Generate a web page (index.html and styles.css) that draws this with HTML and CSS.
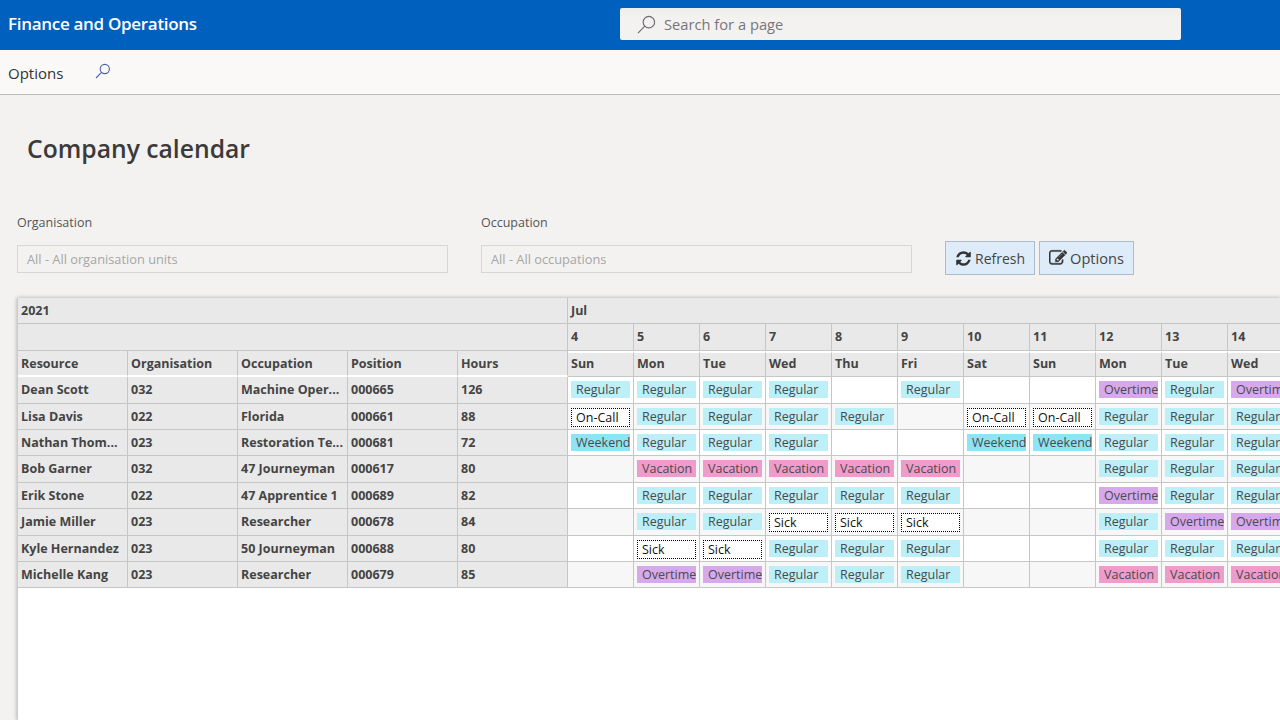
FILE: index.html
```html
<!DOCTYPE html>
<html lang="en">
<head>
<meta charset="utf-8">
<title>Company calendar</title>
<link rel="stylesheet" href="styles.css">
</head>
<body>
<header class="topbar">
  <div class="brand">Finance and Operations</div>
  <div class="search">
    <svg class="search-icon" viewBox="0 0 20 20"><circle cx="12.5" cy="7.5" r="6"/><path d="M8.2 11.8 1 19"/></svg>
    <span>Search for a page</span>
  </div>
</header>
<nav class="toolbar">
  <span class="tool-label">Options</span>
  <svg class="tool-icon" viewBox="0 0 16 16"><circle cx="9.8" cy="6" r="4.6"/><path d="M6.5 9.3 1 15"/></svg>
</nav>
<main class="page">
  <h1 class="title">Company calendar</h1>
  <section class="filters">
    <div class="field">
      <label class="field-label">Organisation</label>
      <div class="field-input">All - All organisation units</div>
    </div>
    <div class="field">
      <label class="field-label">Occupation</label>
      <div class="field-input">All - All occupations</div>
    </div>
    <div class="actions">
      <button class="btn"><svg class="btn-icon" viewBox="0 0 1792 1792"><path d="M1639 1056q0 5-1 7-64 268-268 434.5t-478 166.5q-146 0-282.5-55t-243.5-157l-129 129q-19 19-45 19t-45-19-19-45v-448q0-26 19-45t45-19h448q26 0 45 19t19 45-19 45l-137 137q71 66 161 102t187 36q134 0 250-65t186-179q11-17 53-117 8-23 30-23h192q13 0 22.5 9.5t9.5 22.5zm25-800v448q0 26-19 45t-45 19h-448q-26 0-45-19t-19-45 19-45l138-138q-148-137-349-137-134 0-250 65t-186 179q-11 17-53 117-8 23-30 23h-199q-13 0-22.5-9.5t-9.5-22.5v-7q65-268 270-434.5t480-166.5q146 0 284 55.5t245 156.5l130-129q19-19 45-19t45 19 19 45z"/></svg>Refresh</button>
      <button class="btn btn-wide"><svg class="btn-icon btn-icon-lg" viewBox="0 0 1792 1792"><path d="M888 1184l116-116-152-152-116 116v56h96v96h56zm440-720q-16-16-33 1l-350 350q-17 17-1 33t33-1l350-350q17-17 1-33zm80 594v190q0 119-84.5 203.5t-203.5 84.5h-832q-119 0-203.5-84.5t-84.5-203.5v-832q0-119 84.5-203.5t203.5-84.5h832q63 0 117 25 15 7 18 23 3 17-9 29l-49 49q-14 14-32 8-23-6-45-6h-832q-66 0-113 47t-47 113v832q0 66 47 113t113 47h832q66 0 113-47t47-113v-126q0-13 9-22l64-64q15-15 35-7t20 29zm-96-738l288 288-672 672h-288v-288zm444 132l-92 92-288-288 92-92q28-28 68-28t68 28l152 152q28 28 28 68t-28 68z"/></svg>Options</button>
    </div>
  </section>
  <section class="calendar">
    <div class="grid">
      <div class="cell head span5">2021</div>
      <div class="cell head span11">Jul</div>

      <div class="cell head span5"></div>
      <div class="cell head">4</div><div class="cell head">5</div><div class="cell head">6</div><div class="cell head">7</div><div class="cell head">8</div><div class="cell head">9</div><div class="cell head">10</div><div class="cell head">11</div><div class="cell head">12</div><div class="cell head">13</div><div class="cell head">14</div>

      <div class="cell head colhead">Resource</div><div class="cell head colhead">Organisation</div><div class="cell head colhead">Occupation</div><div class="cell head colhead">Position</div><div class="cell head colhead">Hours</div>
      <div class="cell head dayhead">Sun</div><div class="cell head dayhead">Mon</div><div class="cell head dayhead">Tue</div><div class="cell head dayhead">Wed</div><div class="cell head dayhead">Thu</div><div class="cell head dayhead">Fri</div><div class="cell head dayhead">Sat</div><div class="cell head dayhead">Sun</div><div class="cell head dayhead">Mon</div><div class="cell head dayhead">Tue</div><div class="cell head dayhead">Wed</div>

      <div class="cell head">Dean Scott</div><div class="cell head">032</div><div class="cell head">Machine Oper...</div><div class="cell head">000665</div><div class="cell head">126</div>
      <div class="cell day"><span class="chip reg">Regular</span></div><div class="cell day"><span class="chip reg">Regular</span></div><div class="cell day"><span class="chip reg">Regular</span></div><div class="cell day"><span class="chip reg">Regular</span></div><div class="cell day"></div><div class="cell day"><span class="chip reg">Regular</span></div><div class="cell day"></div><div class="cell day"></div><div class="cell day"><span class="chip ot">Overtime</span></div><div class="cell day"><span class="chip reg">Regular</span></div><div class="cell day"><span class="chip ot">Overtime</span></div>

      <div class="cell head">Lisa Davis</div><div class="cell head">022</div><div class="cell head">Florida</div><div class="cell head">000661</div><div class="cell head">88</div>
      <div class="cell day alt"><span class="chip dot">On-Call</span></div><div class="cell day alt"><span class="chip reg">Regular</span></div><div class="cell day alt"><span class="chip reg">Regular</span></div><div class="cell day alt"><span class="chip reg">Regular</span></div><div class="cell day alt"><span class="chip reg">Regular</span></div><div class="cell day alt"></div><div class="cell day alt"><span class="chip dot">On-Call</span></div><div class="cell day alt"><span class="chip dot">On-Call</span></div><div class="cell day alt"><span class="chip reg">Regular</span></div><div class="cell day alt"><span class="chip reg">Regular</span></div><div class="cell day alt"><span class="chip reg">Regular</span></div>

      <div class="cell head">Nathan Thom...</div><div class="cell head">023</div><div class="cell head">Restoration Te...</div><div class="cell head">000681</div><div class="cell head">72</div>
      <div class="cell day"><span class="chip wkd">Weekend</span></div><div class="cell day"><span class="chip reg">Regular</span></div><div class="cell day"><span class="chip reg">Regular</span></div><div class="cell day"><span class="chip reg">Regular</span></div><div class="cell day"></div><div class="cell day"></div><div class="cell day"><span class="chip wkd">Weekend</span></div><div class="cell day"><span class="chip wkd">Weekend</span></div><div class="cell day"><span class="chip reg">Regular</span></div><div class="cell day"><span class="chip reg">Regular</span></div><div class="cell day"><span class="chip reg">Regular</span></div>

      <div class="cell head">Bob Garner</div><div class="cell head">032</div><div class="cell head">47 Journeyman</div><div class="cell head">000617</div><div class="cell head">80</div>
      <div class="cell day alt"></div><div class="cell day alt"><span class="chip vac">Vacation</span></div><div class="cell day alt"><span class="chip vac">Vacation</span></div><div class="cell day alt"><span class="chip vac">Vacation</span></div><div class="cell day alt"><span class="chip vac">Vacation</span></div><div class="cell day alt"><span class="chip vac">Vacation</span></div><div class="cell day alt"></div><div class="cell day alt"></div><div class="cell day alt"><span class="chip reg">Regular</span></div><div class="cell day alt"><span class="chip reg">Regular</span></div><div class="cell day alt"><span class="chip reg">Regular</span></div>

      <div class="cell head">Erik Stone</div><div class="cell head">022</div><div class="cell head">47 Apprentice 1</div><div class="cell head">000689</div><div class="cell head">82</div>
      <div class="cell day"></div><div class="cell day"><span class="chip reg">Regular</span></div><div class="cell day"><span class="chip reg">Regular</span></div><div class="cell day"><span class="chip reg">Regular</span></div><div class="cell day"><span class="chip reg">Regular</span></div><div class="cell day"><span class="chip reg">Regular</span></div><div class="cell day"></div><div class="cell day"></div><div class="cell day"><span class="chip ot">Overtime</span></div><div class="cell day"><span class="chip reg">Regular</span></div><div class="cell day"><span class="chip reg">Regular</span></div>

      <div class="cell head">Jamie Miller</div><div class="cell head">023</div><div class="cell head">Researcher</div><div class="cell head">000678</div><div class="cell head">84</div>
      <div class="cell day alt"></div><div class="cell day alt"><span class="chip reg">Regular</span></div><div class="cell day alt"><span class="chip reg">Regular</span></div><div class="cell day alt"><span class="chip dot">Sick</span></div><div class="cell day alt"><span class="chip dot">Sick</span></div><div class="cell day alt"><span class="chip dot">Sick</span></div><div class="cell day alt"></div><div class="cell day alt"></div><div class="cell day alt"><span class="chip reg">Regular</span></div><div class="cell day alt"><span class="chip ot">Overtime</span></div><div class="cell day alt"><span class="chip ot">Overtime</span></div>

      <div class="cell head">Kyle Hernandez</div><div class="cell head">023</div><div class="cell head">50 Journeyman</div><div class="cell head">000688</div><div class="cell head">80</div>
      <div class="cell day"></div><div class="cell day"><span class="chip dot">Sick</span></div><div class="cell day"><span class="chip dot">Sick</span></div><div class="cell day"><span class="chip reg">Regular</span></div><div class="cell day"><span class="chip reg">Regular</span></div><div class="cell day"><span class="chip reg">Regular</span></div><div class="cell day"></div><div class="cell day"></div><div class="cell day"><span class="chip reg">Regular</span></div><div class="cell day"><span class="chip reg">Regular</span></div><div class="cell day"><span class="chip reg">Regular</span></div>

      <div class="cell head">Michelle Kang</div><div class="cell head">023</div><div class="cell head">Researcher</div><div class="cell head">000679</div><div class="cell head">85</div>
      <div class="cell day alt"></div><div class="cell day alt"><span class="chip ot">Overtime</span></div><div class="cell day alt"><span class="chip ot">Overtime</span></div><div class="cell day alt"><span class="chip reg">Regular</span></div><div class="cell day alt"><span class="chip reg">Regular</span></div><div class="cell day alt"><span class="chip reg">Regular</span></div><div class="cell day alt"></div><div class="cell day alt"></div><div class="cell day alt"><span class="chip vac">Vacation</span></div><div class="cell day alt"><span class="chip vac">Vacation</span></div><div class="cell day alt"><span class="chip vac">Vacation</span></div>
    </div>
  </section>
</main>
</body>
</html>
```
FILE: styles.css
```css
* { box-sizing: border-box; }
html, body { margin: 0; height: 720px; overflow: hidden; }
body {
  font-family: "Open Sans", "Noto Sans", "Liberation Sans", sans-serif;
  background: #f3f2f1;
  color: #444;
  display: flex;
  flex-direction: column;
}
.topbar {
  height: 50px;
  flex: none;
  background: #0060bd;
  display: flex;
  align-items: center;
  padding-left: 8px;
}
.brand {
  width: 612px;
  margin-top: -4px;
  color: #fff;
  font-size: 17px;
  font-weight: 600;
  letter-spacing: -0.3px;
}
.search {
  width: 561px;
  height: 32px;
  margin-top: -2px;
  background: linear-gradient(#eeedec, #f3f2f1 30%);
  border-radius: 2px;
  display: flex;
  align-items: center;
  padding-left: 17px;
  font-size: 14.7px;
  color: #77757c;
  gap: 8px;
}
.search-icon { width: 19px; height: 19px; fill: none; stroke: #6b6b70; stroke-width: 1.2; }
.toolbar {
  height: 45px;
  flex: none;
  background: #faf9f8;
  border-bottom: 1px solid #bdbdbd;
  display: flex;
  align-items: center;
  padding-left: 8px;
  gap: 32px;
}
.tool-label { font-size: 15px; color: #333; margin-top: 1px; }
.tool-icon { width: 16px; height: 16px; margin-top: -3px; fill: none; stroke: #4a5fb0; stroke-width: 1.1; }
.page { flex: 1; display: flex; flex-direction: column; min-height: 0; }
.title {
  margin: 36px 0 0 27px;
  font-size: 24.7px;
  line-height: 36px;
  font-weight: 600;
  color: #3a3a3a;
}
.filters {
  display: flex;
  margin: 47px 0 0 17px;
  height: 72px;
}
.field { width: 431px; margin-right: 33px; }
.field-label { display: block; font-size: 12.5px; line-height: 18px; color: #555; }
.field-input {
  margin-top: 13px;
  height: 28px;
  border: 1px solid #d6d6d6;
  background: #f3f2f1;
  font-size: 12.8px;
  line-height: 26px;
  padding-left: 9px;
  color: #a6a6a6;
}
.actions { display: flex; gap: 4px; align-items: flex-start; padding-top: 27px; }
.btn {
  height: 34px;
  border: 1px solid #adbccb;
  background: #deebf9;
  color: #444;
  font: 14px "Open Sans", "Noto Sans", sans-serif;
  padding: 0 9px;
  display: flex;
  align-items: center;
  gap: 3px;
}
.btn-wide { font-size: 14.6px; }
.btn-icon { width: 17px; height: 17px; fill: #333; }
.btn-icon-lg { width: 18px; height: 18px; stroke: #333; stroke-width: 40; }
.calendar {
  flex: 1;
  margin: 12px 0 0 17px;
  background: #fff;
  border-left: 1px solid #ccc;
  box-shadow: 0 0 4px rgba(0,0,0,.3);
  overflow: hidden;
  min-height: 0;
}
.grid {
  display: grid;
  width: 1285px;
  grid-template-columns: repeat(5, 110px) repeat(11, 66px);
  grid-auto-rows: 26.4px;
  white-space: nowrap;
}
.cell {
  border-right: 1px solid #c6c6c6;
  border-bottom: 1px solid #c6c6c6;
  overflow: hidden;
  font-size: 12.5px;
  line-height: 25px;
  padding-left: 3px;
  background: #fff;
}
.head { background: #e9e9e9; font-weight: 700; color: #444; }
.span5 { grid-column: span 5; }
.span11 { grid-column: span 11; }
.colhead { border-bottom: 2px solid #fff; }
.dayhead { border-top: 2px solid #fff; line-height: 21px; }
.day { padding: 4px 0 0 3px; background: #fff; }
.alt { background: #f7f7f7; }
.chip {
  display: block;
  width: 59px;
  height: 17px;
  padding-left: 5px;
  font-size: 12.5px;
  line-height: 17px;
  overflow: hidden;
  color: #4a4a4a;
}
.reg { background: #bdeff9; }
.wkd { background: #8ce4f6; }
.vac { background: #ef9ccc; }
.ot { background: #d7a9ec; }
.dot {
  height: 19px;
  padding-left: 4px;
  background: #fff;
  border: 1px dotted #000;
  color: #111;
}
```
